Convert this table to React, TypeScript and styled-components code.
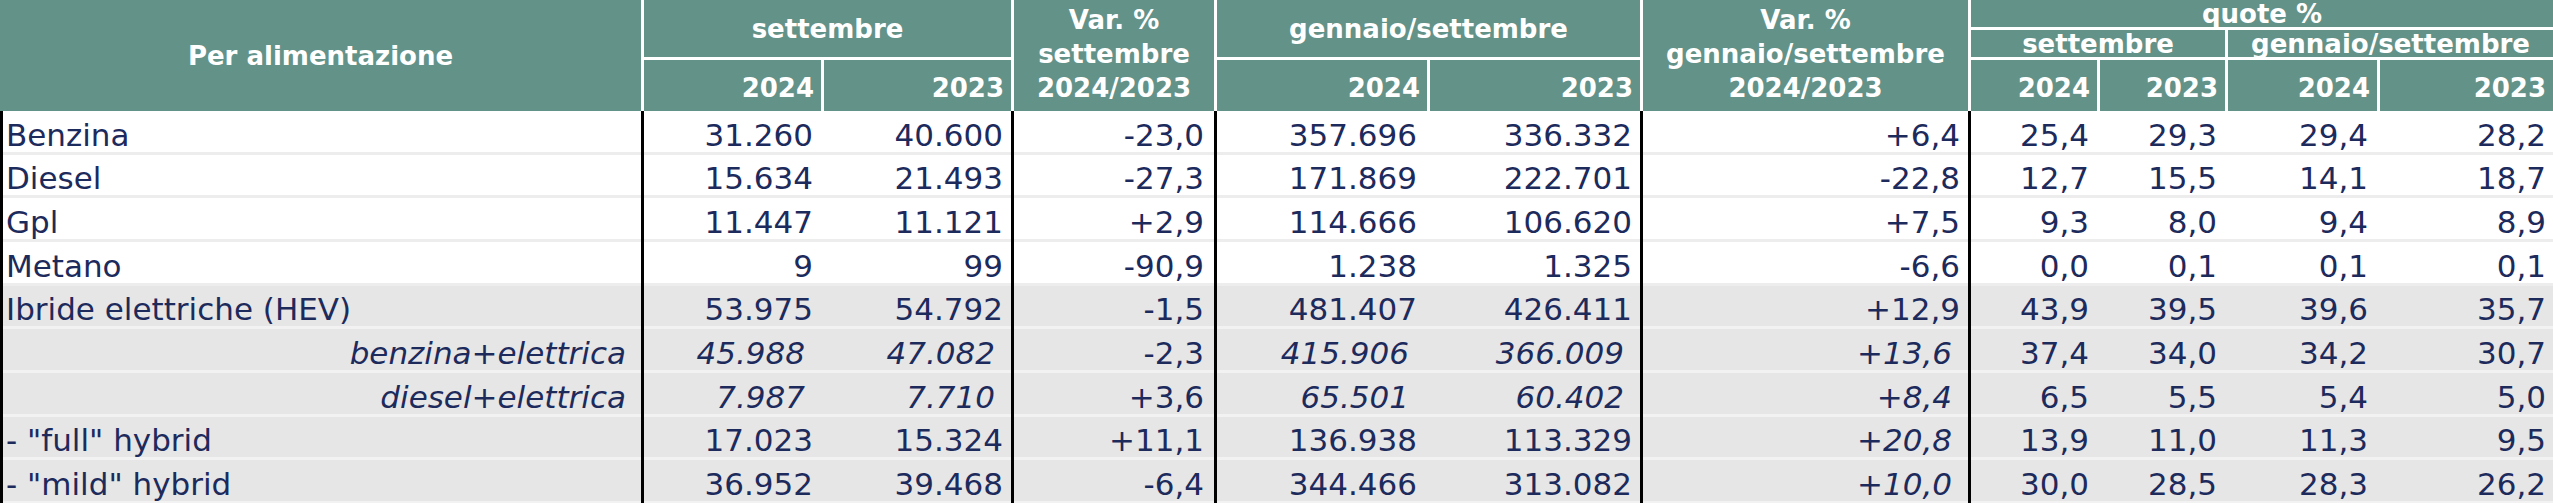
import React from 'react';
import styled, { createGlobalStyle, css } from 'styled-components';

const GlobalStyle = createGlobalStyle`
  html, body {
    margin: 0;
    padding: 0;
    background: #ffffff;
  }
  body {
    font-family: "DejaVu Sans", Verdana, sans-serif;
  }
`;

const HEAD_BG = '#639289';
const INK = '#1d2a5c';

const Table = styled.table`
  width: 2553px;
  table-layout: fixed;
  border-collapse: separate;
  border-spacing: 0;
  font-family: "DejaVu Sans", Verdana, sans-serif;
`;

const Col = styled.col<{ $w: number }>`
  width: ${p => p.$w}px;
`;

const HeadRow = styled.tr<{ $h: number }>`
  height: ${p => p.$h}px;
`;

const headBase = css`
  box-sizing: border-box;
  background: ${HEAD_BG};
  color: #ffffff;
  font-weight: bold;
  font-size: 26px;
  padding: 0;
  white-space: nowrap;
  border-left: 3px solid #ffffff;
`;

const TitleHead = styled.th`
  ${headBase};
  border-left: none;
  text-align: center;
  vertical-align: middle;
  line-height: 30px;
`;

const GroupHead = styled.th`
  ${headBase};
  border-bottom: 3px solid #ffffff;
  text-align: center;
  vertical-align: middle;
  line-height: 30px;
`;

const StackHead = styled.th`
  ${headBase};
  text-align: center;
  vertical-align: bottom;
  line-height: 34px;
  padding-bottom: 6px;
`;

const BandHead = styled.th`
  ${headBase};
  border-bottom: 3px solid #ffffff;
  text-align: center;
  vertical-align: top;
  line-height: 25px;
  padding-top: 2px;
`;

const YearHead = styled.th`
  ${headBase};
  text-align: right;
  vertical-align: bottom;
  line-height: 30px;
  padding-right: 7px;
  padding-bottom: 8px;
`;

const BodyRow = styled.tr<{ $shade: boolean }>`
  height: 43.67px;
  background: ${p => (p.$shade ? '#e6e6e6' : '#ffffff')};
`;

const cellBase = css<{ $shade: boolean }>`
  box-sizing: border-box;
  color: ${INK};
  font-size: 31px;
  line-height: normal;
  padding: 0 0 2px 0;
  vertical-align: bottom;
  white-space: nowrap;
  box-shadow: inset 0 -3px 0 ${p => (p.$shade ? '#f2f2f2' : '#ededed')};
`;

const LabelCell = styled.td<{ $shade: boolean; $sub: boolean }>`
  ${cellBase};
  border-left: 3px solid #000000;
  text-align: ${p => (p.$sub ? 'right' : 'left')};
  font-style: ${p => (p.$sub ? 'italic' : 'normal')};
  padding-left: 3px;
  padding-right: ${p => (p.$sub ? 15 : 0)}px;
`;

const NumCell = styled.td<{ $shade: boolean; $rule: boolean; $italic: boolean; $pad: number }>`
  ${cellBase};
  border-left: ${p => (p.$rule ? '3px solid #000000' : 'none')};
  text-align: right;
  font-style: ${p => (p.$italic ? 'italic' : 'normal')};
  padding-right: ${p => p.$pad + (p.$italic ? 8 : 0)}px;
`;

const widths = [641, 180, 190, 203, 213, 213, 328, 129, 128, 152, 176];

// columns (by value index) that start with a black rule in the body
const ruled = [0, 2, 3, 5, 6];
const pads = [8, 8, 10, 10, 8, 8, 8, 8, 9, 7];

type Line = {
  label: string;
  values: string[];
  shade: boolean;
  sub?: boolean;
  italic?: number[];
};

const lines: Line[] = [
  { label: 'Benzina', values: ['31.260', '40.600', '-23,0', '357.696', '336.332', '+6,4', '25,4', '29,3', '29,4', '28,2'], shade: false },
  { label: 'Diesel', values: ['15.634', '21.493', '-27,3', '171.869', '222.701', '-22,8', '12,7', '15,5', '14,1', '18,7'], shade: false },
  { label: 'Gpl', values: ['11.447', '11.121', '+2,9', '114.666', '106.620', '+7,5', '9,3', '8,0', '9,4', '8,9'], shade: false },
  { label: 'Metano', values: ['9', '99', '-90,9', '1.238', '1.325', '-6,6', '0,0', '0,1', '0,1', '0,1'], shade: false },
  { label: 'Ibride elettriche (HEV)', values: ['53.975', '54.792', '-1,5', '481.407', '426.411', '+12,9', '43,9', '39,5', '39,6', '35,7'], shade: true },
  { label: 'benzina+elettrica', values: ['45.988', '47.082', '-2,3', '415.906', '366.009', '+13,6', '37,4', '34,0', '34,2', '30,7'], shade: true, sub: true, italic: [0, 1, 3, 4, 5] },
  { label: 'diesel+elettrica', values: ['7.987', '7.710', '+3,6', '65.501', '60.402', '+8,4', '6,5', '5,5', '5,4', '5,0'], shade: true, sub: true, italic: [0, 1, 3, 4, 5] },
  { label: '- "full" hybrid', values: ['17.023', '15.324', '+11,1', '136.938', '113.329', '+20,8', '13,9', '11,0', '11,3', '9,5'], shade: true, italic: [5] },
  { label: '- "mild" hybrid', values: ['36.952', '39.468', '-6,4', '344.466', '313.082', '+10,0', '30,0', '28,5', '28,3', '26,2'], shade: true, italic: [5] },
];

function App() {
  return (
    <>
      <GlobalStyle />
      <Table>
        <colgroup>
          {widths.map((w, i) => (
            <Col key={i} $w={w} />
          ))}
        </colgroup>
        <thead>
          <HeadRow $h={30}>
            <TitleHead rowSpan={3}>Per alimentazione</TitleHead>
            <GroupHead colSpan={2} rowSpan={2}>settembre</GroupHead>
            <StackHead rowSpan={3}>
              Var. %<br />settembre<br />2024/2023
            </StackHead>
            <GroupHead colSpan={2} rowSpan={2}>gennaio/settembre</GroupHead>
            <StackHead rowSpan={3}>
              Var. %<br />gennaio/settembre<br />2024/2023
            </StackHead>
            <BandHead colSpan={4}>quote %</BandHead>
          </HeadRow>
          <HeadRow $h={30}>
            <BandHead colSpan={2}>settembre</BandHead>
            <BandHead colSpan={2}>gennaio/settembre</BandHead>
          </HeadRow>
          <HeadRow $h={51}>
            <YearHead>2024</YearHead>
            <YearHead>2023</YearHead>
            <YearHead>2024</YearHead>
            <YearHead>2023</YearHead>
            <YearHead>2024</YearHead>
            <YearHead>2023</YearHead>
            <YearHead>2024</YearHead>
            <YearHead>2023</YearHead>
          </HeadRow>
        </thead>
        <tbody>
          {lines.map(line => (
            <BodyRow key={line.label} $shade={line.shade}>
              <LabelCell $shade={line.shade} $sub={!!line.sub}>
                {line.label}
              </LabelCell>
              {line.values.map((v, i) => (
                <NumCell
                  key={i}
                  $shade={line.shade}
                  $rule={ruled.includes(i)}
                  $italic={!!line.italic?.includes(i)}
                  $pad={pads[i]}
                >
                  {v}
                </NumCell>
              ))}
            </BodyRow>
          ))}
        </tbody>
      </Table>
    </>
  );
}

export default App;
